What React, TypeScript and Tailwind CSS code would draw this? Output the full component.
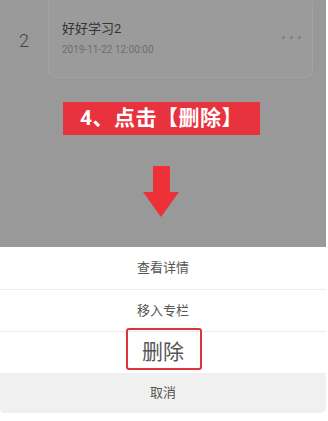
import React from 'react';

const font = { fontFamily: 'Roboto, "Noto Sans CJK SC", sans-serif' };

const ActionRow = ({ label, h }: { label: string; h: string }) => (
  <div className={`${h} flex items-center justify-center text-[13px] text-[#555] border-b border-[#ececec]`}>
    {label}
  </div>
);

export default function App() {
  return (
    <div className="w-[328px] h-[421px] bg-white flex flex-col overflow-hidden" style={font}>
      <div className="w-[326px] h-[247px] bg-[#999999] flex flex-col">
        <div className="flex h-[78px]">
          <div className="w-[48px] flex items-center justify-center pt-[2px] text-[18px] font-light text-[#454545]">2</div>
          <div className="w-[265px] h-[82px] -mt-[4px] rounded-lg border border-[#a3a3a3] bg-[#9b9b9b] flex items-center pl-[13px] pr-[12px]">
            <div className="flex-1 flex flex-col pt-[2px]">
              <span className="text-[13px] leading-[16px] text-[#333]">好好学习2</span>
              <span className="mt-[7px] text-[10px] leading-[12px] text-[#6e6e6e]">2019-11-22 12:00:00</span>
            </div>
            <div className="flex gap-[5px] -mr-[1px]">
              <span className="w-[3px] h-[3px] rounded-full bg-[#7d7d7d]" />
              <span className="w-[3px] h-[3px] rounded-full bg-[#7d7d7d]" />
              <span className="w-[3px] h-[3px] rounded-full bg-[#7d7d7d]" />
            </div>
          </div>
        </div>
        <div className="mt-[24px] ml-[63px] w-[197px] h-[33px] bg-[#e8323d] flex items-center justify-center text-white text-[21px] font-bold tracking-[0.5px]">
          4、点击【删除】
        </div>
        <div className="mt-[31px] ml-[143px]">
          <svg width="36" height="51" viewBox="0 0 36 51">
            <path d="M10 0 H27 V26 H36 L18 51 L0 26 H10 Z" fill="#ee3139" />
          </svg>
        </div>
      </div>
      <div className="w-[326px] flex flex-col">
        <ActionRow label="查看详情" h="h-[43px]" />
        <ActionRow label="移入专栏" h="h-[42px]" />
        <div className="relative h-[41px] flex items-center justify-center">
          <div className="absolute left-[126px] -top-[4px] w-[76px] h-[42px] border-2 border-[#d8353f] rounded-[3px]" />
          <span className="text-[21px] text-[#555]">删除</span>
        </div>
        <div className="h-[40px] bg-[#f0f0f0] rounded-b-[5px] flex items-center justify-center text-[13px] text-[#555]">
          取消
        </div>
      </div>
    </div>
  );
}
